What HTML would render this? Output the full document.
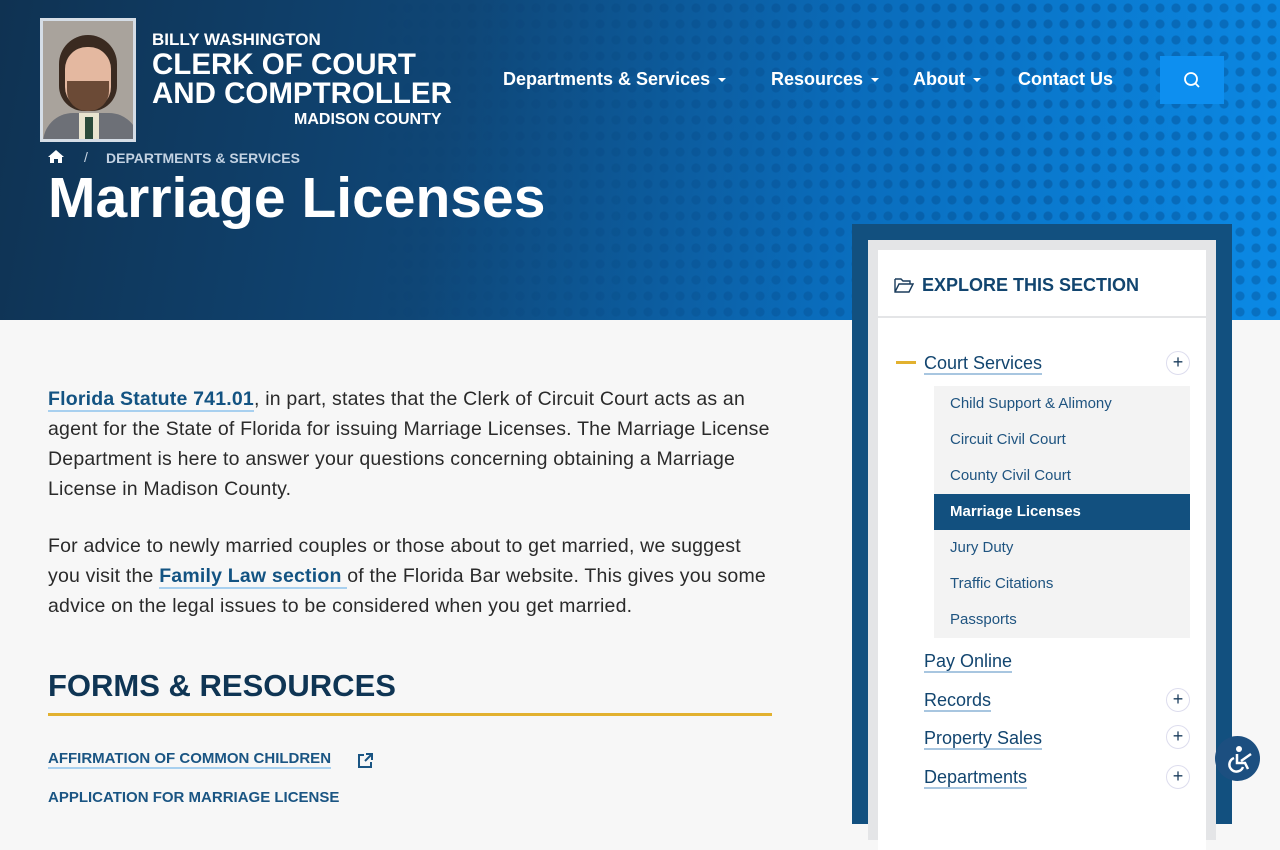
<!DOCTYPE html>
<html><head><meta charset="utf-8"><style>
*{margin:0;padding:0;box-sizing:border-box}
body{width:1280px;height:800px;overflow:hidden;background:#f7f7f7;font-family:"Liberation Sans",sans-serif;position:relative}
.hero{position:absolute;left:0;top:0;width:1280px;height:320px;background:linear-gradient(100deg,#0f3252 0%,#0f4676 35%,#0a6cbb 65%,#0b8ae6 100%);overflow:hidden}
.dots{position:absolute;inset:0;background-image:radial-gradient(circle,rgba(0,40,90,.25) 4px,transparent 5px);background-size:16px 16px;-webkit-mask-image:linear-gradient(90deg,transparent 30%,#000 80%);mask-image:linear-gradient(90deg,transparent 30%,#000 80%)}
.photo{position:absolute;left:40px;top:18px;width:96px;height:124px;border:3px solid #d5dde6;background:#a9a39c;overflow:hidden}
.w{color:#fff;position:absolute;font-weight:bold}
.nav{position:absolute;top:69px;color:#fff;font-weight:bold;font-size:18px}
.car{display:inline-block;width:0;height:0;border-left:4px solid transparent;border-right:4px solid transparent;border-top:4px solid #fff;margin-left:8px;vertical-align:middle}
.search{position:absolute;left:1160px;top:56px;width:64px;height:48px;background:#0d8ff0}
p.b{position:absolute;left:48px;white-space:nowrap;font-size:19.5px;letter-spacing:.2px;line-height:30px;color:#2a2a2a}
a{color:#135382;font-weight:bold;text-decoration:none;border-bottom:2px solid #a8d0ef}
.side{position:absolute;left:852px;top:224px;width:380px;height:600px;background:#12507f}
.side2{position:absolute;left:868px;top:240px;width:348px;height:600px;background:#e4e5e7}
.side3{position:absolute;left:878px;top:250px;width:328px;height:600px;background:#fff}
.top{height:68px;border-bottom:2px solid #e4e5e7;position:relative}
.l1{position:absolute;left:46px;font-size:18px;color:#12456f;border-bottom:2px solid #a8c6e0;line-height:20px}
.plus{position:absolute;left:288px;width:24px;height:24px;border-radius:50%;border:1px solid #dde;color:#1a3c5c;font-size:18px;text-align:center;line-height:21px}
.sub{position:absolute;left:56px;top:136px;width:256px;height:252px;background:#f3f3f3}
.sub div{height:36px;line-height:36px;padding-left:16px;font-size:15px;color:#1f5480}
.sub div.on{background:#12507f;color:#fff;font-weight:bold}
</style></head><body>
<div class="hero"><div class="dots"></div>
<div class="photo">
<div style="position:absolute;left:16px;top:14px;width:58px;height:76px;border-radius:30px 30px 26px 26px;background:#3a2a20"></div>
<div style="position:absolute;left:22px;top:26px;width:46px;height:62px;border-radius:22px;background:#e4b8a0"></div>
<div style="position:absolute;left:24px;top:60px;width:42px;height:30px;border-radius:0 0 20px 20px;background:#6b4a36"></div>
<div style="position:absolute;left:0;top:92px;width:96px;height:40px;border-radius:30px 30px 0 0;background:#6d7077"></div>
<div style="position:absolute;left:36px;top:92px;width:20px;height:30px;background:#e9e4cf"></div>
<div style="position:absolute;left:42px;top:96px;width:8px;height:26px;background:#2a4a3a"></div>
</div>
<div class="w" style="left:152px;top:30px;font-size:17px">BILLY WASHINGTON</div>
<div class="w" style="left:152px;top:50px;font-size:29.5px;line-height:29px">CLERK OF COURT<br>AND COMPTROLLER</div>
<div class="w" style="left:294px;top:111px;font-size:16px">MADISON COUNTY</div>
<div class="nav" style="left:503px">Departments &amp; Services<span class="car"></span></div>
<div class="nav" style="left:771px">Resources<span class="car"></span></div>
<div class="nav" style="left:913px">About<span class="car"></span></div>
<div class="nav" style="left:1018px">Contact Us</div>
<div class="search"><svg width="64" height="48"><circle cx="31" cy="23" r="6" fill="none" stroke="#fff" stroke-width="1.8"/><path d="M35 27l4 4" stroke="#fff" stroke-width="1.8"/></svg></div>
<svg style="position:absolute;left:48px;top:149px" width="16" height="14"><path d="M8 1L0 8h2v6h4V10h4v4h4V8h2z" fill="#fff"/></svg>
<div style="position:absolute;left:84px;top:149px;color:#c8d6e4;font-size:14px">/</div>
<div style="position:absolute;left:106px;top:150px;color:#c3d2e2;font-size:14px;font-weight:bold">DEPARTMENTS &amp; SERVICES</div>
<div class="w" style="left:48px;top:165px;font-size:57px">Marriage Licenses</div>
</div>
<p class="b" style="top:384px"><a>Florida Statute 741.01</a>, in part, states that the Clerk of Circuit Court acts as an<br>agent for the State of Florida for issuing Marriage Licenses. The Marriage License<br>Department is here to answer your questions concerning obtaining a Marriage<br>License in Madison County.</p>
<p class="b" style="top:531px">For advice to newly married couples or those about to get married, we suggest<br>you visit the <a>Family Law section </a>of the Florida Bar website. This gives you some<br>advice on the legal issues to be considered when you get married.</p>
<div style="position:absolute;left:48px;top:668px;font-size:31px;font-weight:bold;color:#0f3554">FORMS &amp; RESOURCES</div>
<div style="position:absolute;left:48px;top:713px;width:724px;height:3px;background:#e2b12f"></div>
<div style="position:absolute;left:48px;top:750px;font-size:15px;font-weight:bold;color:#1a5583;border-bottom:2px solid #a8d0ef">AFFIRMATION OF COMMON CHILDREN</div>
<svg style="position:absolute;left:356px;top:752px" width="18" height="18"><path d="M8 3H3v12h12v-5M10 2h6v6M16 2l-7 7" fill="none" stroke="#1a5583" stroke-width="2"/></svg>
<div style="position:absolute;left:48px;top:789px;font-size:15px;font-weight:bold;color:#1a5583">APPLICATION FOR MARRIAGE LICENSE</div>
<div class="side"></div><div class="side2"></div>
<div class="side3">
<div class="top"><svg style="position:absolute;left:16px;top:27px" width="20" height="16"><path d="M1 2h6l2 2h7v3M1 2v13h14l4-8H5L1 15" fill="none" stroke="#1a3c5c" stroke-width="1.4"/></svg>
<div style="position:absolute;left:44px;top:25px;font-size:18px;font-weight:bold;color:#12456f">EXPLORE THIS SECTION</div></div>
<div style="position:absolute;left:18px;top:111px;width:20px;height:3px;background:#e2b12f"></div>
<div class="l1" style="top:103px">Court Services</div><div class="plus" style="top:101px">+</div>
<div class="sub"><div>Child Support &amp; Alimony</div><div>Circuit Civil Court</div><div>County Civil Court</div><div class="on">Marriage Licenses</div><div>Jury Duty</div><div>Traffic Citations</div><div>Passports</div></div>
<div class="l1" style="top:401px">Pay Online</div>
<div class="l1" style="top:440px">Records</div><div class="plus" style="top:438px">+</div>
<div class="l1" style="top:478px">Property Sales</div><div class="plus" style="top:475px">+</div>
<div class="l1" style="top:517px">Departments</div><div class="plus" style="top:515px">+</div>
</div>
<div style="position:absolute;left:1215px;top:736px;width:45px;height:45px;border-radius:50%;background:#1c4f80"><svg width="45" height="45"><circle cx="24" cy="13" r="3" fill="#fff"/><path d="M22 18v9h8l3 6M19 22a7 7 0 1 0 9 9M26 25l10-7" fill="none" stroke="#fff" stroke-width="2.5"/></svg></div>
</body></html>
